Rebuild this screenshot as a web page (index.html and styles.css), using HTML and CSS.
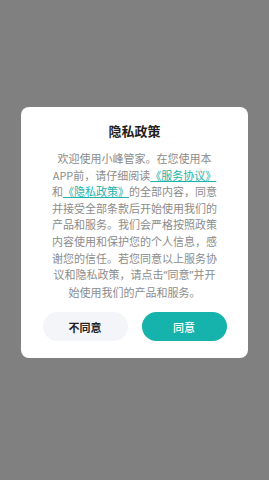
FILE: index.html
```html
<!DOCTYPE html>
<html lang="zh-CN">
  <head>
    <meta charset="UTF-8" />
    <meta name="viewport" content="width=device-width, initial-scale=1.0" />
    <title>隐私政策</title>
    <link rel="stylesheet" href="styles.css">
  </head>
  <body>
    <div class="mask">
      <div class="dialog">
        <h1 class="dialog__title">隐私政策</h1>
        <p class="dialog__text">欢迎使用小峰管家。在您使用本APP前，请仔细阅读<a class="dialog__link" href="#">《服务协议》</a>和<a class="dialog__link" href="#">《隐私政策》</a>的全部内容，同意并接受全部条款后开始使用我们的产品和服务。我们会严格按照政策内容使用和保护您的个人信息，感谢您的信任。若您同意以上服务协议和隐私政策，请点击<span class="quote">“</span>同意<span class="quote">”</span>并开始使用我们的产品和服务。</p>
        <div class="dialog__actions">
          <button class="btn btn--cancel">不同意</button>
          <button class="btn btn--ok">同意</button>
        </div>
      </div>
    </div>
  </body>
</html>
```

FILE: styles.css
```css
html,
body {
  margin: 0;
  height: 100%;
}
body {
  background: #808080;
  font-family: "Noto Sans CJK SC", sans-serif;
}
.mask {
  display: flex;
  justify-content: center;
  padding-top: 107px;
}
.dialog {
  width: 227px;
  box-sizing: border-box;
  padding: 15px 0 17px;
  background: #fff;
  border-radius: 8px;
  display: flex;
  flex-direction: column;
  align-items: center;
}
.dialog__title {
  margin: 0;
  font-size: 13px;
  line-height: 18px;
  font-weight: 700;
  color: #1f1f1f;
}
.dialog__text {
  width: 166px;
  margin: 10px 0 0;
  font-size: 11px;
  line-height: 16.6px;
  color: #8c8c8c;
  text-align: center;
}
.dialog__link {
  color: #1ab3aa;
  text-decoration: underline;
}
.quote {
  font-family: "Noto Sans", sans-serif;
}
.dialog__actions {
  display: flex;
  gap: 14px;
  margin-top: 12px;
}
.btn {
  width: 85px;
  height: 29px;
  border: none;
  border-radius: 15px;
  font-family: "Noto Sans CJK SC", sans-serif;
  font-size: 11px;
  cursor: pointer;
}
.btn--cancel {
  background: #f4f5f9;
  color: #222;
  font-weight: 700;
}
.btn--ok {
  background: #15b3ab;
  color: #fff;
  font-weight: 500;
}
```
